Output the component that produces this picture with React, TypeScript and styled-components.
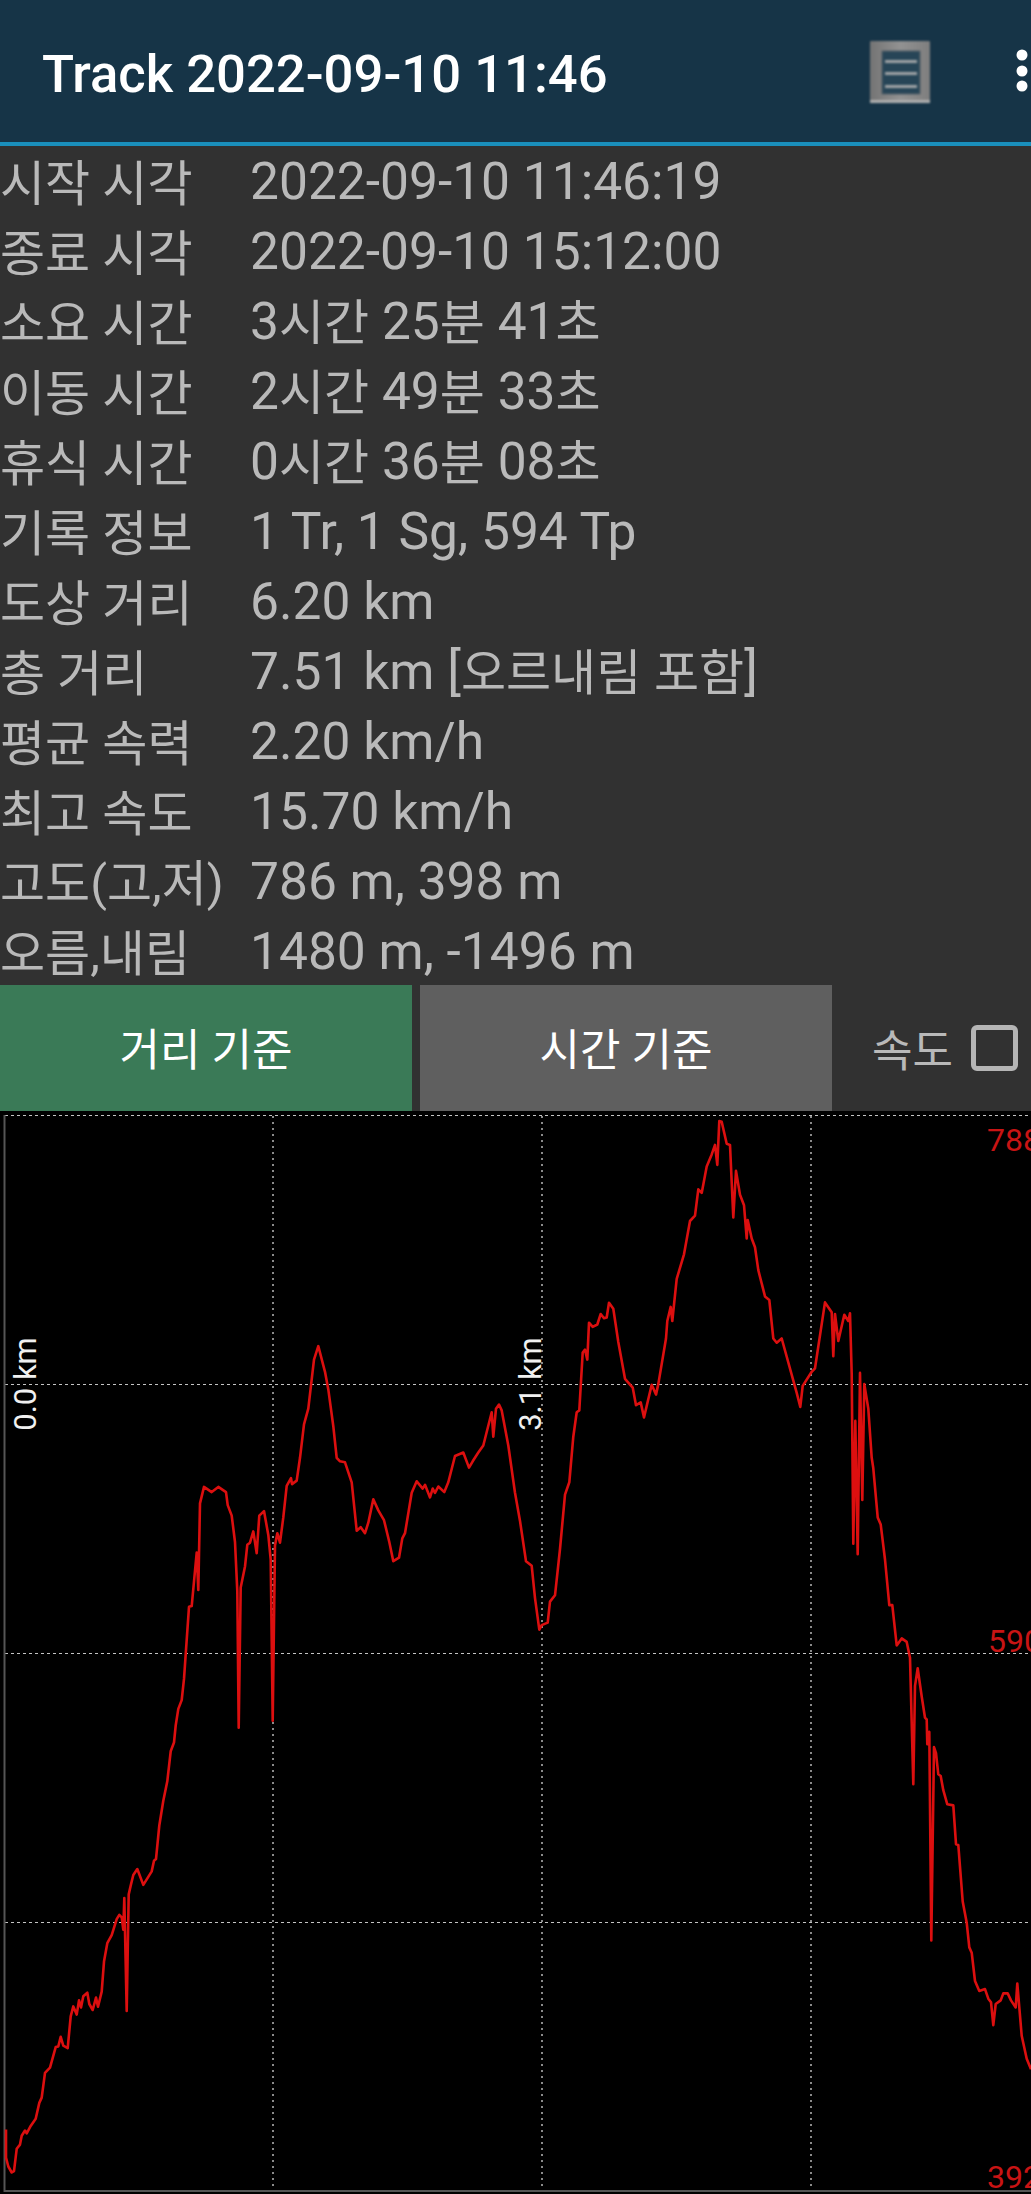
import React from 'react';
import styled, { createGlobalStyle } from 'styled-components';

const GlobalStyle = createGlobalStyle`
  html, body {
    margin: 0;
    padding: 0;
    background: #313131;
  }
  body {
    font-family: Roboto, "Noto Sans CJK KR", sans-serif;
    overflow: hidden;
  }
`;

const Page = styled.div`
  width: 1031px;
  height: 2194px;
  display: flex;
  flex-direction: column;
  background: #313131;
  overflow: hidden;
`;

const Header = styled.header`
  height: 142px;
  flex-shrink: 0;
  display: flex;
  align-items: center;
  padding-left: 42px;
  background: #163447;
  border-bottom: 4px solid #1a8fbc;
`;

const Title = styled.h1`
  flex: 1;
  margin: 6px 0 0;
  font-size: 52.6px;
  font-weight: 500;
  color: #ffffff;
  white-space: nowrap;
`;

const ListIcon = styled.svg`
  width: 60px;
  height: 62px;
  margin-right: 86px;
  margin-top: 1px;
  filter: blur(1px);
`;

const MoreIcon = styled.svg`
  width: 12px;
  height: 48px;
  margin-right: 3px;
  margin-top: -1px;
`;

const InfoList = styled.dl`
  margin: 0;
  display: grid;
  grid-template-columns: 250px 1fr;
  grid-auto-rows: 70px;
  flex-shrink: 0;
  font-size: 51.5px;
  color: #b9b9b9;
`;

const Label = styled.dt`
  height: 70px;
  font-size: 49px;
  line-height: 76px;
  white-space: nowrap;
`;

const Value = styled.dd`
  margin: 0;
  height: 70px;
  line-height: 72px;
  white-space: nowrap;
`;

const Hangul = styled.span`
  font-size: 49px;
  line-height: 1;
  vertical-align: -1px;
`;

const Controls = styled.div`
  height: 126px;
  flex-shrink: 0;
  display: flex;
  gap: 8px;
  margin-top: -1px;
`;

const ModeButton = styled.button<{ $active?: boolean }>`
  width: 412px;
  border: none;
  padding: 0 0 2px;
  font-family: inherit;
  font-size: 44px;
  color: #ffffff;
  background: ${(p) => (p.$active ? '#3a7a57' : '#5f5f5f')};
`;

const SpeedToggle = styled.label`
  flex: 1;
  display: flex;
  align-items: center;
  padding-left: 32px;
  gap: 18px;
  font-size: 44px;
  color: #b9b9b9;
`;

const CheckBox = styled.span`
  width: 47px;
  height: 46px;
  box-sizing: border-box;
  border: 5px solid #b5b5b5;
  border-radius: 6px;
`;

const Chart = styled.svg`
  display: block;
  width: 1031px;
  height: 1083px;
  flex-shrink: 0;
  background: #000000;
`;

const DistanceText = styled.text`
  font-family: Roboto, sans-serif;
  font-size: 31px;
  fill: #f0f0f0;
`;

const AltitudeText = styled.text`
  font-family: Roboto, sans-serif;
  font-size: 32px;
  fill: #c81414;
`;

const rows: [string, string][] = [
  ['시작 시각', '2022-09-10 11:46:19'],
  ['종료 시각', '2022-09-10 15:12:00'],
  ['소요 시간', '3시간 25분 41초'],
  ['이동 시간', '2시간 49분 33초'],
  ['휴식 시간', '0시간 36분 08초'],
  ['기록 정보', '1 Tr, 1 Sg, 594 Tp'],
  ['도상 거리', '6.20 km'],
  ['총 거리', '7.51 km [오르내림 포함]'],
  ['평균 속력', '2.20 km/h'],
  ['최고 속도', '15.70 km/h'],
  ['고도(고,저)', '786 m, 398 m'],
  ['오름,내림', '1480 m, -1496 m'],
];

// the hangul runs a little smaller than the digits next to it
const renderText = (value: string) =>
  value.split(/([가-힣]+)/).map((part, i) =>
    i % 2 === 1 ? <Hangul key={i}>{part}</Hangul> : part,
  );

// elevation trace, measured from the picture in four quadrants:
// each block has its own origin and scale
const CHART_TOP = 1111;
const trace: { ox: number; oy: number; sy: number; pts: number[] }[] = [
  {
    ox: 0, oy: 1640, sy: 2.83,
    pts: [
      18,1385, 18,1465, 25,1490, 35,1507, 42,1503, 50,1440, 60,1428, 65,1403, 75,1388, 80,1396,
      92,1375, 107,1355, 118,1310, 125,1295, 135,1225, 150,1210, 167,1152, 175,1150, 182,1123,
      190,1148, 203,1155, 212,1065, 220,1037, 230,1060, 237,1020, 243,1040, 250,1008, 262,998,
      268,1030, 278,1047, 288,1012, 294,1038, 305,995, 312,910, 322,858, 335,835, 350,790, 358,778,
      365,785, 370,820, 373,730, 380,1050, 386,720, 392,695, 400,665, 412,648, 430,693, 455,655,
      462,625, 468,620, 478,525, 490,455, 502,400, 512,315, 522,290, 527,242, 535,195, 545,170, 552,110,
    ],
  },
  {
    ox: 0, oy: 1100, sy: 2.851,
    pts: [
      558,1568, 567,1445, 575,1443, 590,1290, 595,1397, 600,1150, 612,1103, 635,1118, 655,1103,
      678,1118, 683,1155, 695,1185, 705,1260, 712,1400, 716,1790, 722,1390, 735,1330, 742,1268,
      750,1262, 760,1230, 770,1292, 778,1185, 792,1172, 805,1240, 812,1310, 818,1770, 825,1270,
      832,1235, 840,1262, 850,1190, 860,1100, 873,1078, 876,1095, 890,1085, 900,1020, 912,925,
      925,880, 942,740, 955,702, 975,775, 985,825, 1000,930, 1010,1020, 1020,1030, 1035,1033,
      1055,1090, 1070,1228, 1082,1218, 1095,1235, 1105,1205, 1120,1138, 1135,1170, 1152,1198,
      1168,1260, 1180,1315, 1197,1305, 1207,1250, 1215,1235, 1235,1120, 1250,1087, 1268,1108,
      1275,1097, 1290,1133, 1298,1108, 1305,1120, 1315,1102, 1333,1118, 1345,1090, 1365,1015,
      1390,1005, 1407,1048, 1418,1030, 1435,1005, 1450,985, 1475,890, 1480,960, 1488,880, 1497,868,
      1505,885, 1525,985, 1545,1120,
    ],
  },
  {
    ox: 510, oy: 1100, sy: 2.851,
    pts: [
      30,1200, 48,1315, 65,1328, 75,1420, 88,1510, 95,1497, 113,1490, 120,1430, 135,1412, 150,1280,
      165,1125, 178,1090, 190,960, 200,890, 208,885, 218,720, 225,712, 232,740, 237,635, 248,647,
      262,640, 272,610, 282,622, 290,620, 297,578, 310,595, 325,690, 345,795, 368,820, 378,870,
      392,862, 402,905, 425,812, 438,840, 445,810, 468,680, 472,630, 482,590, 487,630, 500,510,
      522,440, 540,345, 555,330, 565,255, 575,265, 590,190, 605,155, 615,128, 622,185, 628,60,
      635,62, 650,125, 660,128, 670,335, 678,202, 690,270, 702,300, 710,395, 713,342, 725,395,
      735,420, 745,485, 765,560, 778,570, 790,680, 800,692, 815,680, 860,835, 871,875, 878,815,
      905,775, 915,765, 945,577, 965,605, 970,730, 975,610, 985,687, 1003,612, 1015,630, 1020,608,
      1025,780, 1030,1265, 1036,915, 1043,1295, 1050,778, 1057,1140, 1063,810, 1075,880, 1085,1020,
      1090,1050, 1103,1190, 1112,1210, 1125,1310, 1138,1440, 1147,1440, 1160,1555, 1175,1535, 1190,1545,
    ],
  },
  {
    ox: 510, oy: 1640, sy: 2.83,
    pts: [
      1200,50, 1210,408, 1215,130, 1223,80, 1235,160, 1245,220, 1250,225, 1252,295, 1258,260,
      1264,850, 1272,303, 1278,320, 1285,380, 1292,385, 1300,425, 1312,465, 1330,468, 1338,578,
      1345,580, 1358,740, 1370,800, 1378,870, 1385,885, 1395,965, 1408,993, 1425,988, 1435,1015,
      1443,1025, 1450,1090, 1457,1030, 1472,1020, 1480,1000, 1493,1000, 1503,1020, 1517,1040,
      1522,972, 1535,1120, 1550,1185, 1563,1215,
    ],
  },
];

const tracePoints = trace
  .flatMap(({ ox, oy, sy, pts }) => {
    const out: string[] = [];
    for (let i = 0; i < pts.length; i += 2) {
      const x = ox + pts[i] / 3;
      const y = oy + pts[i + 1] / sy - CHART_TOP;
      out.push(`${x.toFixed(1)},${y.toFixed(1)}`);
    }
    return out;
  })
  .join(' ');

const gridY = [4.5, 273.5, 542.5, 811.5];
const gridX = [273, 542, 811];

export default function App() {
  return (
    <Page>
      <GlobalStyle />
      <Header>
        <Title>Track 2022-09-10 11:46</Title>
        <ListIcon viewBox="0 0 60 62" aria-label="list">
          <defs>
            <linearGradient id="listBg" x1="0" y1="0" x2="1" y2="0">
              <stop offset="0" stopColor="#747474" />
              <stop offset="0.5" stopColor="#929292" />
              <stop offset="1" stopColor="#7e7e7e" />
            </linearGradient>
          </defs>
          <rect x="0" y="0" width="60" height="62" rx="1" fill="url(#listBg)" />
          <rect x="0" y="59" width="60" height="3" fill="#b0b0b0" />
          <rect x="12" y="10" width="38" height="43" fill="#274557" stroke="#555f66" strokeWidth="1" />
          <rect x="15" y="19" width="32" height="3" fill="#a0a4a6" />
          <rect x="15" y="31" width="32" height="3" fill="#a0a4a6" />
          <rect x="15" y="44" width="32" height="3" fill="#a0a4a6" />
        </ListIcon>
        <MoreIcon viewBox="0 0 12 48" aria-label="more">
          <circle cx="6" cy="8" r="5.5" fill="#ffffff" />
          <circle cx="6" cy="24" r="5.5" fill="#ffffff" />
          <circle cx="6" cy="39" r="5.5" fill="#ffffff" />
        </MoreIcon>
      </Header>
      <InfoList>
        {rows.map(([label, value]) => (
          <React.Fragment key={label}>
            <Label>{renderText(label)}</Label>
            <Value>{renderText(value)}</Value>
          </React.Fragment>
        ))}
      </InfoList>
      <Controls>
        <ModeButton $active>거리 기준</ModeButton>
        <ModeButton>시간 기준</ModeButton>
        <SpeedToggle>
          속도
          <CheckBox />
        </SpeedToggle>
      </Controls>
      <Chart viewBox="0 0 1031 1083">
        {gridY.map((y) => (
          <line key={y} x1="5" x2="1031" y1={y} y2={y} stroke="#c4c4c4" strokeWidth="1" strokeDasharray="3 3" />
        ))}
        {gridX.map((x) => (
          <line key={x} x1={x} x2={x} y1="5" y2="1075" stroke="#8a8a8a" strokeWidth="2" strokeDasharray="2 4" />
        ))}
        <line x1="4.5" x2="4.5" y1="4" y2="1081" stroke="#555555" strokeWidth="2" />
        <line x1="4" x2="1031" y1="1080" y2="1080" stroke="#555555" strokeWidth="2" />
        <polyline points={tracePoints} fill="none" stroke="#dc0f0f" strokeWidth="2.6" strokeLinejoin="round" />
        <DistanceText x="36" y="273" textAnchor="middle" transform="rotate(-90 36 273)">0.0 km</DistanceText>
        <DistanceText x="541" y="273" textAnchor="middle" transform="rotate(-90 541 273)">3.1 km</DistanceText>
        <AltitudeText x="987" y="40">788</AltitudeText>
        <AltitudeText x="988" y="541">590</AltitudeText>
        <AltitudeText x="987" y="1077">392</AltitudeText>
      </Chart>
    </Page>
  );
}
